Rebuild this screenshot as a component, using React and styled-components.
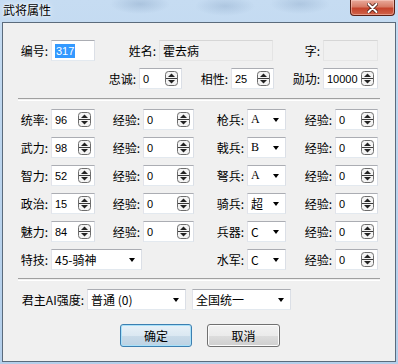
import React from 'react'
import styled, { createGlobalStyle } from 'styled-components'

const GlobalStyle = createGlobalStyle`
  html, body {
    margin: 0;
    padding: 0;
    background: #b9d1ea;
  }
`

const cjk = `"Noto Sans CJK SC", "Liberation Sans", sans-serif`
const latin = `"Liberation Sans", "Noto Sans CJK SC", sans-serif`

const Window = styled.div`
  width: 398px;
  height: 364px;
  box-sizing: border-box;
  padding: 0 2px 2px 2px;
  display: flex;
  flex-direction: column;
  background:
    radial-gradient(ellipse 30px 10px at 140px 4px, rgba(120, 150, 185, 0.35), transparent),
    radial-gradient(ellipse 30px 10px at 225px 6px, rgba(120, 150, 185, 0.3), transparent),
    radial-gradient(ellipse 30px 10px at 300px 4px, rgba(120, 150, 185, 0.3), transparent),
    linear-gradient(to bottom, #c6dcf2 0%, #bcd5ee 40%, #b4cfeb 100%);
  font-family: ${cjk};
  color: #000;
`

const TitleBar = styled.div`
  height: 22px;
  display: flex;
  justify-content: space-between;
  align-items: flex-start;
`

const Title = styled.div`
  font-size: 12px;
  line-height: 12px;
  padding: 4px 0 0 1px;
  text-shadow: 0 0 6px #fff, 0 0 3px #fff;
`

const CloseButton = styled.div`
  width: 45px;
  height: 16px;
  margin-right: 1px;
  box-sizing: border-box;
  border: 1px solid #5a1f14;
  border-top: none;
  border-radius: 0 0 4px 4px;
  background: linear-gradient(to bottom, #e9a99b 0%, #d77b66 45%, #c5432c 55%, #d0634a 100%);
  box-shadow: inset 0 0 0 1px rgba(255, 220, 210, 0.45);
  display: flex;
  align-items: center;
  justify-content: center;
`

const Client = styled.div`
  flex: 1;
  background: #f0f0f0;
  border: 1px solid #5b6b7c;
  display: flex;
  flex-direction: column;
`

const Row = styled.div`
  display: flex;
  align-items: center;
  height: 21px;
  margin-top: ${p => p.$mt ?? 7}px;
`

const Label = styled.div`
  width: ${p => p.$w}px;
  box-sizing: border-box;
  padding-right: 3px;
  text-align: right;
  font-size: 12px;
  white-space: nowrap;
  flex-shrink: 0;
`

const Box = styled.div`
  width: ${p => p.$w}px;
  height: 21px;
  margin-left: ${p => p.$ml ?? 0}px;
  box-sizing: border-box;
  flex-shrink: 0;
  border: 1px solid;
  border-color: ${p => p.$disabled ? '#d6d6d6 #e4e4e4 #e6e6e6 #e4e4e4' : '#abadb3 #dbdfe6 #e3e9ef #e2e3ea'};
  background: ${p => p.$disabled ? '#f0f0f0' : '#fff'};
  display: flex;
  align-items: center;
  padding-left: 2px;
  font-family: ${latin};
  font-size: 11px;
`

const CjkText = styled.span`
  font-family: ${p => p.$serif ? '"Liberation Serif", serif' : cjk};
  font-size: 12px;
  padding-left: 1px;
`

const NumText = styled.span`
  flex: 1;
  padding-left: 1px;
`

const Selected = styled.span`
  background: #3399ff;
  color: #fff;
  padding: 1px 1px;
  margin-left: 1px;
`

const Separator = styled.div`
  margin: ${p => p.$mt}px 0 0 15px;
  width: 362px;
  height: 1px;
  border-top: 1px solid #a0a0a0;
  border-bottom: 1px solid #fff;
`

const ComboText = styled.div`
  flex: 1;
  overflow: hidden;
  white-space: nowrap;
`

const Arrow = styled.div`
  width: 0;
  height: 0;
  margin-right: 6px;
  border-left: 3.5px solid transparent;
  border-right: 3.5px solid transparent;
  border-top: 4px solid #000;
`

const ButtonRow = styled.div`
  display: flex;
  gap: 15px;
  padding-left: 117px;
  margin-top: 14px;
`

const Button = styled.div`
  width: ${p => p.$w}px;
  height: 23px;
  box-sizing: border-box;
  border: 1px solid ${p => p.$default ? '#3c7fb1' : '#707070'};
  border-radius: 3px;
  background: ${p => p.$default
    ? 'linear-gradient(to bottom, #e8f1f8 0%, #dbe8f2 50%, #c9dbe9 51%, #bdd2e3 100%)'
    : 'linear-gradient(to bottom, #f2f2f2 0%, #ebebeb 50%, #dddddd 51%, #cfcfcf 100%)'};
  box-shadow: inset 0 0 0 1px ${p => p.$default ? '#a9e1f9' : '#fcfcfc'};
  display: flex;
  align-items: center;
  justify-content: center;
  font-size: 12px;
`

function SpinIcon () {
  return (
    <svg width="13" height="15" viewBox="0 0 13 15" style={{ marginRight: 3, flexShrink: 0 }}>
      <rect x="0.5" y="0.5" width="12" height="14" rx="3" fill="#f4f4f4" stroke="#6d6d6d" />
      <line x1="1" y1="7.5" x2="12" y2="7.5" stroke="#3a3a3a" />
      <path d="M3 6 L6.5 2.5 L10 6 Z" fill="#222" />
      <path d="M3 9 L10 9 L6.5 12.5 Z" fill="#222" />
    </svg>
  )
}

function Spin ({ w, value }) {
  return (
    <Box $w={w}>
      <NumText>{value}</NumText>
      <SpinIcon />
    </Box>
  )
}

function Combo ({ w, ml, children }) {
  return (
    <Box $w={w} $ml={ml}>
      <ComboText>{children}</ComboText>
      <Arrow />
    </Box>
  )
}

const stats = [
  { name: '统率', value: '96', arm: '枪兵', grade: 'A', serif: true },
  { name: '武力', value: '98', arm: '戟兵', grade: 'B', serif: true },
  { name: '智力', value: '52', arm: '弩兵', grade: 'A', serif: true },
  { name: '政治', value: '15', arm: '骑兵', grade: '超' },
  { name: '魅力', value: '84', arm: '兵器', grade: 'C' },
]

export default function App () {
  return (
    <Window>
      <GlobalStyle />
      <TitleBar>
        <Title>武将属性</Title>
        <CloseButton>
          <svg width="11" height="10" viewBox="0 0 11 10">
            <path d="M1.5 1 L9.5 9 M9.5 1 L1.5 9" stroke="#4a1a12" strokeWidth="3.6" strokeLinecap="round" />
            <path d="M1.5 1 L9.5 9 M9.5 1 L1.5 9" stroke="#fff" strokeWidth="2" strokeLinecap="round" />
          </svg>
        </CloseButton>
      </TitleBar>
      <Client>
        <Row $mt={17}>
          <Label $w={48}>编号:</Label>
          <Box $w={44}><Selected>317</Selected></Box>
          <Label $w={64}>姓名:</Label>
          <Box $w={114} $disabled><CjkText>霍去病</CjkText></Box>
          <Label $w={50}>字:</Label>
          <Box $w={55} $disabled />
        </Row>
        <Row>
          <Label $w={136}>忠诚:</Label>
          <Spin w={43} value="0" />
          <Label $w={49}>相性:</Label>
          <Spin w={43} value="25" />
          <Label $w={49}>勋功:</Label>
          <Spin w={55} value="10000" />
        </Row>

        <Separator $mt={9} />

        {stats.map((s, i) => (
          <Row key={s.name} $mt={i === 0 ? 8 : 7}>
            <Label $w={48}>{s.name}:</Label>
            <Spin w={44} value={s.value} />
            <Label $w={48}>经验:</Label>
            <Spin w={51} value="0" />
            <Label $w={53}>{s.arm}:</Label>
            <Combo w={39}><CjkText $serif={s.serif}>{s.grade}</CjkText></Combo>
            <Label $w={49}>经验:</Label>
            <Spin w={43} value="0" />
          </Row>
        ))}
        <Row>
          <Label $w={48}>特技:</Label>
          <Combo w={91}><CjkText>45-骑神</CjkText></Combo>
          <Label $w={105}>水军:</Label>
          <Combo w={39}><CjkText>C</CjkText></Combo>
          <Label $w={49}>经验:</Label>
          <Spin w={43} value="0" />
        </Row>

        <Separator $mt={8} />

        <Row $mt={8}>
          <Label $w={84}>君主AI强度:</Label>
          <Combo w={99}><CjkText>普通 (0)</CjkText></Combo>
          <Combo w={99} ml={6}><CjkText>全国统一</CjkText></Combo>
        </Row>

        <ButtonRow>
          <Button $w={72} $default>确定</Button>
          <Button $w={73}>取消</Button>
        </ButtonRow>
      </Client>
    </Window>
  )
}
